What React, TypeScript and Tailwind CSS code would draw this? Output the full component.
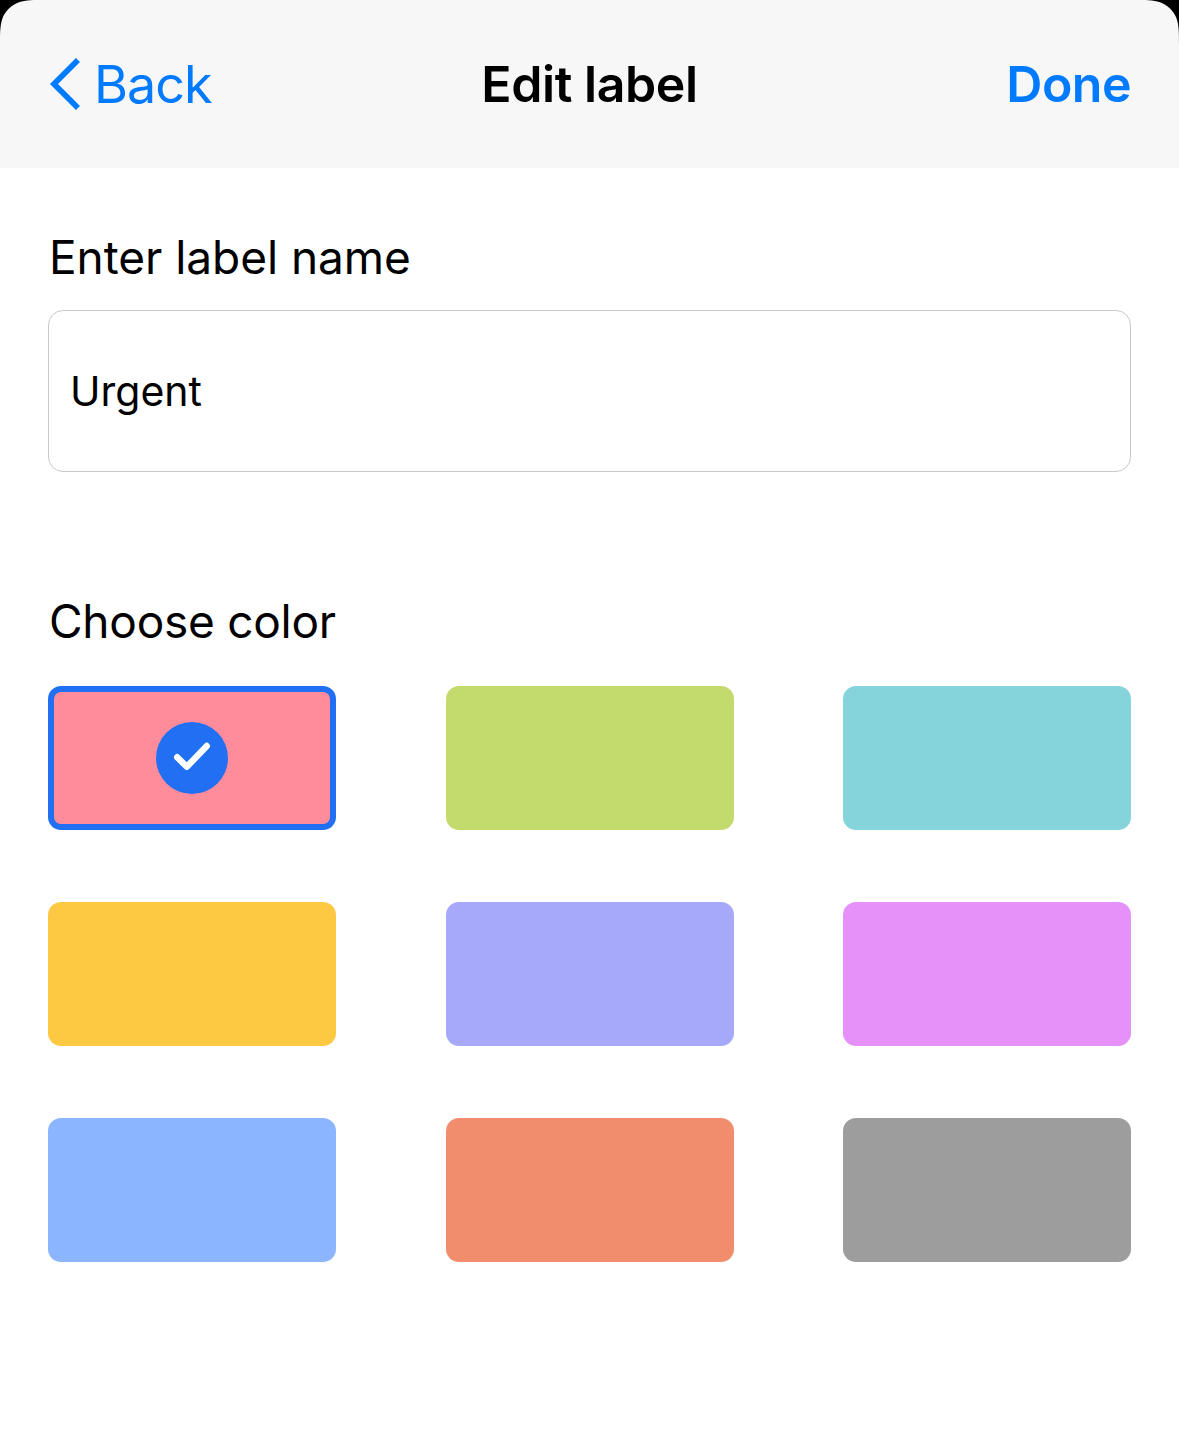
import { useState } from "react";
import { clsx } from "clsx";

interface LabelColor {
  name: string;
  className: string;
}

const LABEL_COLORS: LabelColor[] = [
  { name: "red", className: "bg-[#ff8c9b]" },
  { name: "green", className: "bg-[#c3db6d]" },
  { name: "teal", className: "bg-[#86d4db]" },
  { name: "yellow", className: "bg-[#fdc943]" },
  { name: "indigo", className: "bg-[#a6a8f9]" },
  { name: "pink", className: "bg-[#e691fa]" },
  { name: "blue", className: "bg-[#8bb6ff]" },
  { name: "orange", className: "bg-[#f18d6c]" },
  { name: "gray", className: "bg-[#9d9d9d]" },
];

// Continuous sheet corner, top left by default
function SheetCorner({ className }: { className?: string }) {
  return (
    <svg
      viewBox="0 0 46 46"
      className={clsx("absolute top-0 size-[46px]", className)}
      aria-hidden="true"
    >
      <path
        d="M0 0V45.86C0 32.65 0 26.05 2.25 18.94C5.07 11.18 11.18 5.07 18.94 2.25C26.05 0 32.65 0 45.86 0Z"
        fill="#000"
      />
    </svg>
  );
}

function BackIcon() {
  return (
    <svg viewBox="0 0 32 54" className="h-[54px] w-8" aria-hidden="true">
      <path
        d="M30 3L6 27L30 51"
        fill="none"
        stroke="currentColor"
        strokeWidth="5.7"
      />
    </svg>
  );
}

function SelectedIcon() {
  return (
    <svg viewBox="0 0 72 72" className="size-[72px]" aria-hidden="true">
      <circle cx="36" cy="36" r="36" fill="#2170f4" />
      <path
        d="M21.2 35.2L30.8 44.8L50.8 24"
        fill="none"
        stroke="#fff"
        strokeWidth="6.4"
        strokeLinecap="round"
        strokeLinejoin="round"
      />
    </svg>
  );
}

interface ColorSwatchProps {
  color: LabelColor;
  selected: boolean;
  onSelect: () => void;
}

function ColorSwatch({ color, selected, onSelect }: ColorSwatchProps) {
  return (
    <button
      type="button"
      onClick={onSelect}
      className={clsx(
        "flex h-36 w-72 items-center justify-center rounded-[13px]",
        color.className,
        selected && "border-6 border-[#2170f4]"
      )}
    >
      {selected && <SelectedIcon />}
    </button>
  );
}

export default function App() {
  const [name, setName] = useState("Urgent");
  const [selected, setSelected] = useState("red");

  return (
    <main className="relative min-h-screen bg-white font-['Inter',sans-serif] text-black">
      <header className="grid h-42 grid-cols-3 items-center bg-[#f7f7f7] px-12 text-[50px] font-semibold">
        <button
          type="button"
          className="flex items-center gap-[14px] text-[52px] font-normal tracking-[-1px] text-[#007aff]"
        >
          <BackIcon />
          <span className="pt-0.5">Back</span>
        </button>
        <h1 className="text-center tracking-[-0.4px]">Edit label</h1>
        <button type="button" className="text-right tracking-[-0.5px] text-[#007aff]">
          Done
        </button>
      </header>
      <SheetCorner className="left-0" />
      <SheetCorner className="right-0 -scale-x-100" />

      <div className="px-12 pt-[57px]">
        <label htmlFor="label-name" className="block pl-px text-[46px] leading-[64px] tracking-[-0.05px]">
          Enter label name
        </label>
        <input
          id="label-name"
          value={name}
          onChange={(e) => setName(e.target.value)}
          className="mt-[21px] block h-[162px] w-full rounded-[15px] border border-[#c8c8c8] px-[21px] text-[41px] outline-none"
        />

        <h2 className="mt-[117px] pl-px text-[46px] leading-[64px] tracking-[-0.25px]">
          Choose color
        </h2>
        <div className="mt-[33px] grid grid-cols-[repeat(3,288px)] justify-between gap-y-18">
          {LABEL_COLORS.map((color) => (
            <ColorSwatch
              key={color.name}
              color={color}
              selected={color.name === selected}
              onSelect={() => setSelected(color.name)}
            />
          ))}
        </div>
      </div>
    </main>
  );
}
